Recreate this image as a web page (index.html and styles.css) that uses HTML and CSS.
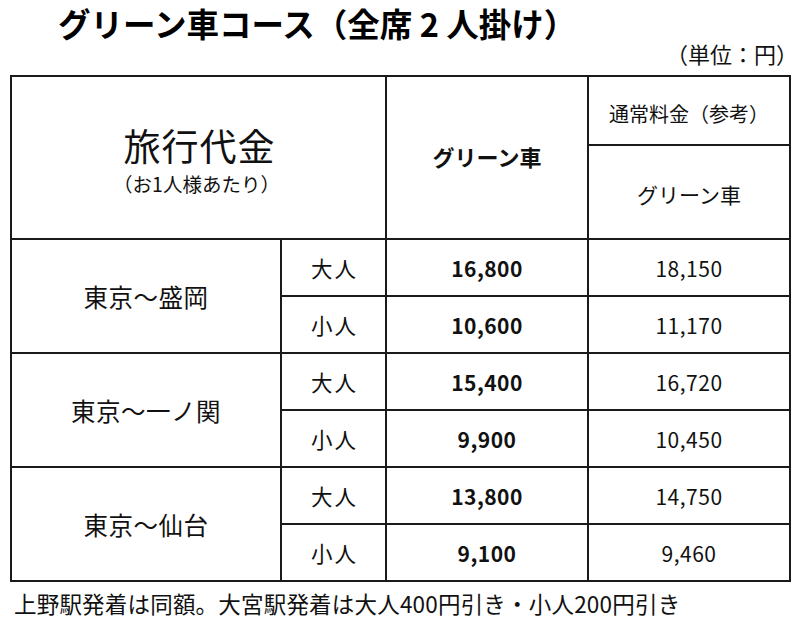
FILE: index.html
```html
<!DOCTYPE html>
<html lang="ja">
<head>
<meta charset="utf-8">
<link rel="stylesheet" href="styles.css">
</head>
<body>
<div class="page">
  <h1 class="title">グリーン車コース（全席 2 人掛け）</h1>
  <div class="unit">（単位：円）</div>
  <table class="fare">
    <colgroup>
      <col class="c-route"><col class="c-type"><col class="c-green"><col class="c-ref">
    </colgroup>
    <tr class="h1">
      <td rowspan="2" colspan="2" class="head-main">
        <div class="big">旅行代金</div>
        <div class="sub">（お1人様あたり）</div>
      </td>
      <td rowspan="2" class="bold head-green">グリーン車</td>
      <td class="head-ref">通常料金（参考）</td>
    </tr>
    <tr class="h2">
      <td class="head-ref2">グリーン車</td>
    </tr>
    <tr class="r top">
      <td rowspan="2" class="route">東京～盛岡</td>
      <td class="type">大人</td><td class="num bold">16,800</td><td class="num">18,150</td>
    </tr>
    <tr class="r">
      <td class="type">小人</td><td class="num bold">10,600</td><td class="num">11,170</td>
    </tr>
    <tr class="r top">
      <td rowspan="2" class="route">東京～一ノ関</td>
      <td class="type">大人</td><td class="num bold">15,400</td><td class="num">16,720</td>
    </tr>
    <tr class="r">
      <td class="type">小人</td><td class="num bold">9,900</td><td class="num">10,450</td>
    </tr>
    <tr class="r top">
      <td rowspan="2" class="route">東京～仙台</td>
      <td class="type">大人</td><td class="num bold">13,800</td><td class="num">14,750</td>
    </tr>
    <tr class="r">
      <td class="type">小人</td><td class="num bold">9,100</td><td class="num">9,460</td>
    </tr>
  </table>
  <p class="note">上野駅発着は同額。大宮駅発着は大人400円引き・小人200円引き</p>
</div>
</body>
</html>
```

FILE: styles.css
```css
html, body {
  margin: 0;
  padding: 0;
  background: #fff;
}
body {
  font-family: "Noto Sans CJK JP", "Noto Sans", sans-serif;
  color: #111;
}
.page {
  width: 800px;
  height: 627px;
  padding: 0 0 0 10px;
  box-sizing: border-box;
  overflow: hidden;
}
.title {
  margin: 0;
  padding: 0 0 0 48px;
  font-size: 32.5px;
  font-weight: 700;
  line-height: 46px;
  letter-spacing: 0;
  height: 40px;
  color: #000;
}
.unit {
  text-align: right;
  font-size: 22px;
  line-height: 26px;
  height: 35px;
  padding-right: 2px;
  letter-spacing: 0;
}
.fare {
  border-collapse: collapse;
  table-layout: fixed;
  width: 779px;
}
.c-route { width: 270px; }
.c-type { width: 105px; }
.c-green { width: 202px; }
.c-ref { width: 202px; }
.fare td {
  border: 2px solid #1a1a1a;
  text-align: center;
  vertical-align: middle;
  padding: 0;
  font-size: 20px;
}
.h1 { height: 69px; }
.h2 { height: 94px; }
.r { height: 57px; }
.r td { border-top: 1px solid #333; }
.r.top td { border-top: 2px solid #1a1a1a; }
.fare td.head-main { padding-top: 2px; }
.big {
  font-size: 37px;
  line-height: 50px;
  letter-spacing: 1px;
  padding-left: 2px;
}
.sub {
  font-size: 19.5px;
  line-height: 28px;
  margin-right: 4px;
}
.fare td.head-green {
  font-size: 22px;
  padding-bottom: 4px;
}
.fare td.head-ref { font-size: 20px; padding-top: 6px; }
.fare td.head-ref2 { font-size: 21px; padding-top: 4px; }
.fare td.route { font-size: 24.5px; letter-spacing: 0.5px; }
.fare td.type { font-size: 21.5px; letter-spacing: 2px; padding-left: 2px; }
.fare td.num { font-size: 21px; letter-spacing: 0.5px; }
.bold { font-weight: 700; }
.note {
  margin: 6px 0 0 4px;
  font-size: 22.5px;
  line-height: 30px;
  letter-spacing: 0.2px;
}
```
